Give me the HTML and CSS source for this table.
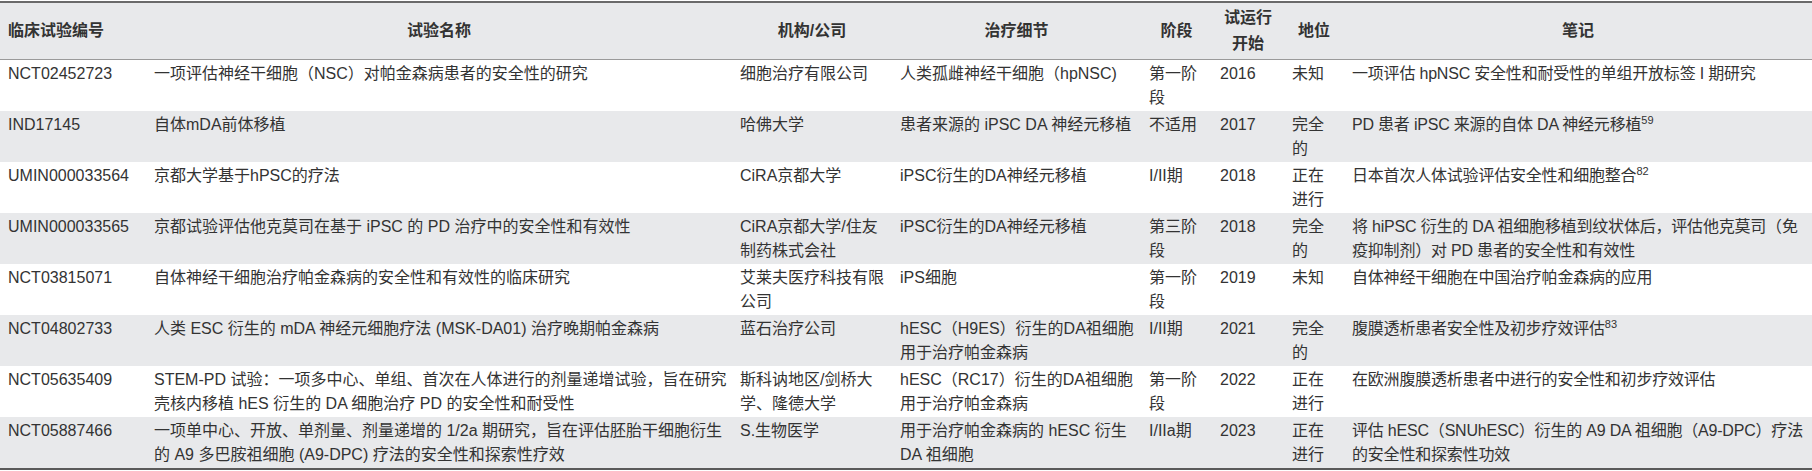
FILE: index.html
```html
<!DOCTYPE html>
<html lang="zh-CN">
<head>
<meta charset="utf-8">
<title>临床试验</title>
<link rel="stylesheet" href="styles.css">
</head>
<body>
<table class="trials">
  <colgroup>
    <col class="c-id">
    <col class="c-name">
    <col class="c-org">
    <col class="c-detail">
    <col class="c-phase">
    <col class="c-year">
    <col class="c-status">
    <col class="c-notes">
  </colgroup>
  <thead>
    <tr>
      <th class="left">临床试验编号</th>
      <th>试验名称</th>
      <th>机构/公司</th>
      <th>治疗细节</th>
      <th>阶段</th>
      <th>试运行开始</th>
      <th>地位</th>
      <th>笔记</th>
    </tr>
  </thead>
  <tbody>
    <tr>
      <td>NCT02452723</td>
      <td>一项评估神经干细胞（NSC）对帕金森病患者的安全性的研究</td>
      <td>细胞治疗有限公司</td>
      <td>人类孤雌神经干细胞（hpNSC)</td>
      <td>第一阶段</td>
      <td>2016</td>
      <td class="status">未知</td>
      <td class="notes">一项评估 hpNSC 安全性和耐受性的单组开放标签 I 期研究</td>
    </tr>
    <tr>
      <td>IND17145</td>
      <td>自体mDA前体移植</td>
      <td>哈佛大学</td>
      <td>患者来源的 iPSC DA 神经元移植</td>
      <td>不适用</td>
      <td>2017</td>
      <td class="status">完全的</td>
      <td class="notes">PD 患者 iPSC 来源的自体 DA 神经元移植<sup>59</sup></td>
    </tr>
    <tr>
      <td>UMIN000033564</td>
      <td>京都大学基于hPSC的疗法</td>
      <td>CiRA京都大学</td>
      <td>iPSC衍生的DA神经元移植</td>
      <td>I/II期</td>
      <td>2018</td>
      <td class="status">正在进行</td>
      <td class="notes">日本首次人体试验评估安全性和细胞整合<sup>82</sup></td>
    </tr>
    <tr>
      <td>UMIN000033565</td>
      <td>京都试验评估他克莫司在基于 iPSC 的 PD 治疗中的安全性和有效性</td>
      <td>CiRA京都大学/住友制药株式会社</td>
      <td>iPSC衍生的DA神经元移植</td>
      <td>第三阶段</td>
      <td>2018</td>
      <td class="status">完全的</td>
      <td class="notes">将 hiPSC 衍生的 DA 祖细胞移植到纹状体后，评估他克莫司（免疫抑制剂）对 PD 患者的安全性和有效性</td>
    </tr>
    <tr>
      <td>NCT03815071</td>
      <td>自体神经干细胞治疗帕金森病的安全性和有效性的临床研究</td>
      <td>艾莱夫医疗科技有限公司</td>
      <td>iPS细胞</td>
      <td>第一阶段</td>
      <td>2019</td>
      <td class="status">未知</td>
      <td class="notes">自体神经干细胞在中国治疗帕金森病的应用</td>
    </tr>
    <tr>
      <td>NCT04802733</td>
      <td>人类 ESC 衍生的 mDA 神经元细胞疗法 (MSK-DA01) 治疗晚期帕金森病</td>
      <td>蓝石治疗公司</td>
      <td>hESC（H9ES）衍生的DA祖细胞用于治疗帕金森病</td>
      <td>I/II期</td>
      <td>2021</td>
      <td class="status">完全的</td>
      <td class="notes">腹膜透析患者安全性及初步疗效评估<sup>83</sup></td>
    </tr>
    <tr>
      <td>NCT05635409</td>
      <td>STEM-PD 试验：一项多中心、单组、首次在人体进行的剂量递增试验，旨在研究壳核内移植 hES 衍生的 DA 细胞治疗 PD 的安全性和耐受性</td>
      <td>斯科讷地区/剑桥大学、隆德大学</td>
      <td>hESC（RC17）衍生的DA祖细胞用于治疗帕金森病</td>
      <td>第一阶段</td>
      <td>2022</td>
      <td class="status">正在进行</td>
      <td class="notes">在欧洲腹膜透析患者中进行的安全性和初步疗效评估</td>
    </tr>
    <tr>
      <td>NCT05887466</td>
      <td>一项单中心、开放、单剂量、剂量递增的 1/2a 期研究，旨在评估胚胎干细胞衍生的 A9 多巴胺祖细胞 (A9-DPC) 疗法的安全性和探索性疗效</td>
      <td>S.生物医学</td>
      <td>用于治疗帕金森病的 hESC 衍生 DA 祖细胞</td>
      <td>I/IIa期</td>
      <td>2023</td>
      <td class="status">正在进行</td>
      <td class="notes">评估 hESC（SNUhESC）衍生的 A9 DA 祖细胞（A9-DPC）疗法的安全性和探索性功效</td>
    </tr>
  </tbody>
</table>
</body>
</html>
```
FILE: styles.css
```css
html, body {
  margin: 0;
  padding: 0;
  background: #ffffff;
}

body {
  padding-top: 1px;
  font-family: "Liberation Sans", "Noto Sans CJK SC", sans-serif;
  font-size: 16px;
  color: #333333;
}

.trials {
  width: 1812px;
  table-layout: fixed;
  border-collapse: collapse;
  border-top: 2px solid #6a6a6a;
  border-bottom: 2px solid #5a5a5a;
}

.c-id { width: 146px; }
.c-name { width: 586px; }
.c-org { width: 160px; }
.c-detail { width: 249px; }
.c-phase { width: 71px; }
.c-year { width: 72px; }
.c-status { width: 60px; }
.c-notes { width: 468px; }

.trials thead th {
  background: #e8e9eb;
  font-weight: bold;
  color: #333333;
  line-height: 26px;
  padding: 2px 8px;
  text-align: center;
  vertical-align: middle;
  border-bottom: 1px solid #9a9a9a;
}

.trials thead th.left {
  text-align: left;
}

.trials tbody td {
  line-height: 24px;
  padding: 2px 4px 1px 8px;
  vertical-align: top;
  text-align: left;
  height: 48px;
  box-sizing: content-box;
}

.trials tbody td.status {
  padding-right: 8px;
}

.trials tbody td.notes {
  padding-right: 2px;
  letter-spacing: -0.2px;
}

.trials tbody tr:nth-child(even) td {
  background: #e8e9eb;
}

.trials sup {
  font-size: 11px;
  line-height: 0;
  vertical-align: 6px;
  letter-spacing: 0;
}
```
